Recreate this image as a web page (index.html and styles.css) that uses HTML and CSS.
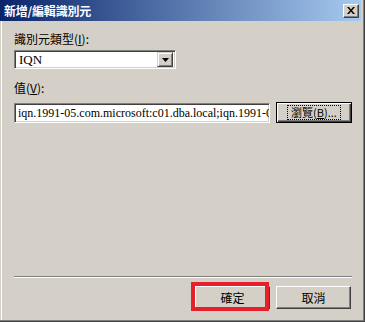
FILE: index.html
```html
<!DOCTYPE html>
<html>
<head>
<meta charset="utf-8">
<link rel="stylesheet" href="styles.css">
</head>
<body>
<div class="window">
  <div class="titlebar">
    <span class="title">新增/編輯識別元</span>
    <span class="close"><svg width="8" height="7" viewBox="0 0 8 7"><path d="M0 0h2l2 2.5L6 0h2L5 3.5 8 7H6L4 4.5 2 7H0l3-3.5z" fill="#000"/></svg></span>
  </div>
  <div class="content">
    <div class="label lbl1">識別元類型(<u>I</u>):</div>
    <div class="select">
      <span class="sel-text">IQN</span>
      <span class="sel-btn"><svg width="7" height="4" viewBox="0 0 7 4"><path d="M0 0h7L3.5 4z" fill="#000"/></svg></span>
    </div>
    <div class="label lbl2">值(<u>V</u>):</div>
    <div class="row">
      <div class="input"><span class="input-text">iqn.1991-05.com.microsoft:c01.dba.local;iqn.1991-05.com.microsoft:c02.dba.local</span></div>
      <div class="btn browse"><span class="focus">瀏覽(<u>B</u>)...</span></div>
    </div>
    <div class="spacer"></div>
    <div class="sep"></div>
    <div class="buttons">
      <div class="btn ok">確定<span class="highlight"></span></div>
      <div class="btn cancel">取消</div>
    </div>
  </div>
</div>
</body>
</html>
```
FILE: styles.css
```css
html, body { margin: 0; padding: 0; background: #d4d0c8; }
body { font-family: "Liberation Serif", "Noto Sans CJK TC", serif; font-size: 12px; color: #000; }
.window {
  width: 365px; height: 322px; box-sizing: border-box;
  background: #d4d0c8;
  border-right: 1px solid #404040; border-bottom: 1px solid #404040;
  box-shadow: inset -1px -1px #808080, inset 1px 0 #d4d0c8, inset 2px 0 #fff;
  display: flex; flex-direction: column;
}
.titlebar {
  height: 21px; margin-right: 3px;
  background: linear-gradient(to right, #0a246a, #a6caf0);
  display: flex; align-items: center; justify-content: space-between;
  padding: 0 2px 0 4px;
}
.title { color: #fff; font-family: "Noto Sans CJK TC", sans-serif; font-weight: bold; font-size: 12px; letter-spacing: -0.2px; }
.close {
  width: 16px; height: 14px; box-sizing: border-box; background: #d4d0c8;
  border-top: 1px solid #fff; border-left: 1px solid #fff;
  border-right: 1px solid #404040; border-bottom: 1px solid #404040;
  box-shadow: inset -1px -1px #808080;
  display: flex; align-items: center; justify-content: center;
}
.content { flex: 1; display: flex; flex-direction: column; padding: 0 12px 12px 14px; }
.label { font-family: "Noto Sans CJK TC", sans-serif; font-size: 12px; line-height: 14px; }
.lbl1 { margin-top: 11px; }
.lbl2 { margin-top: 12px; }
.select {
  margin-top: 4px; width: 162px; height: 19px; box-sizing: border-box;
  background: #fff;
  border-top: 1px solid #808080; border-left: 1px solid #808080;
  border-right: 1px solid #fff; border-bottom: 1px solid #fff;
  box-shadow: inset 1px 1px #404040, inset -1px -1px #d4d0c8;
  display: flex; align-items: center; justify-content: space-between; padding: 2px;
}
.sel-text { font-size: 13px; padding-left: 2px; line-height: 13px; }
.sel-btn {
  width: 16px; height: 15px; box-sizing: border-box; background: #d4d0c8;
  border-top: 1px solid #d4d0c8; border-left: 1px solid #d4d0c8;
  border-right: 1px solid #404040; border-bottom: 1px solid #404040;
  box-shadow: inset 1px 1px #fff, inset -1px -1px #808080;
  display: flex; align-items: center; justify-content: center;
}
.row { margin-top: 7px; display: flex; align-items: center; gap: 6px; }
.input {
  width: 256px; height: 20px; box-sizing: border-box; background: #fff; overflow: hidden;
  border-top: 1px solid #808080; border-left: 1px solid #808080;
  border-right: 1px solid #fff; border-bottom: 1px solid #fff;
  box-shadow: inset 1px 1px #404040, inset -1px -1px #d4d0c8;
  display: flex; align-items: center; padding: 0 2px 0 3px; white-space: nowrap;
}
.input-text { font-size: 12px; line-height: 14px; }
.btn {
  box-sizing: border-box; background: #d4d0c8; position: relative;
  border-top: 1px solid #fff; border-left: 1px solid #fff;
  border-right: 1px solid #404040; border-bottom: 1px solid #404040;
  box-shadow: inset -1px -1px #808080;
  display: flex; align-items: center; justify-content: center;
  font-family: "Noto Sans CJK TC", sans-serif; font-size: 12px;
}
.browse { width: 76px; height: 21px; border: 1px solid #000; box-shadow: inset 1px 1px #fff, inset -1px -1px #404040, inset -2px -2px #808080; }
.focus { border: 1px dotted #000; padding: 0 3px; font-size: 11px; line-height: 13px; height: 13px; display: flex; align-items: center; white-space: nowrap; }
.spacer { flex: 1; }
.sep { height: 1px; background: #808080; border-bottom: 1px solid #fff; }
.buttons { margin-top: 8px; display: flex; justify-content: flex-end; gap: 6px; padding-right: 1px; }
.ok, .cancel { width: 75px; height: 23px; }
.highlight {
  position: absolute; left: -5px; top: -5px; width: 78px; height: 29px; box-sizing: border-box;
  border: 4px solid #e5202a;
}
```
